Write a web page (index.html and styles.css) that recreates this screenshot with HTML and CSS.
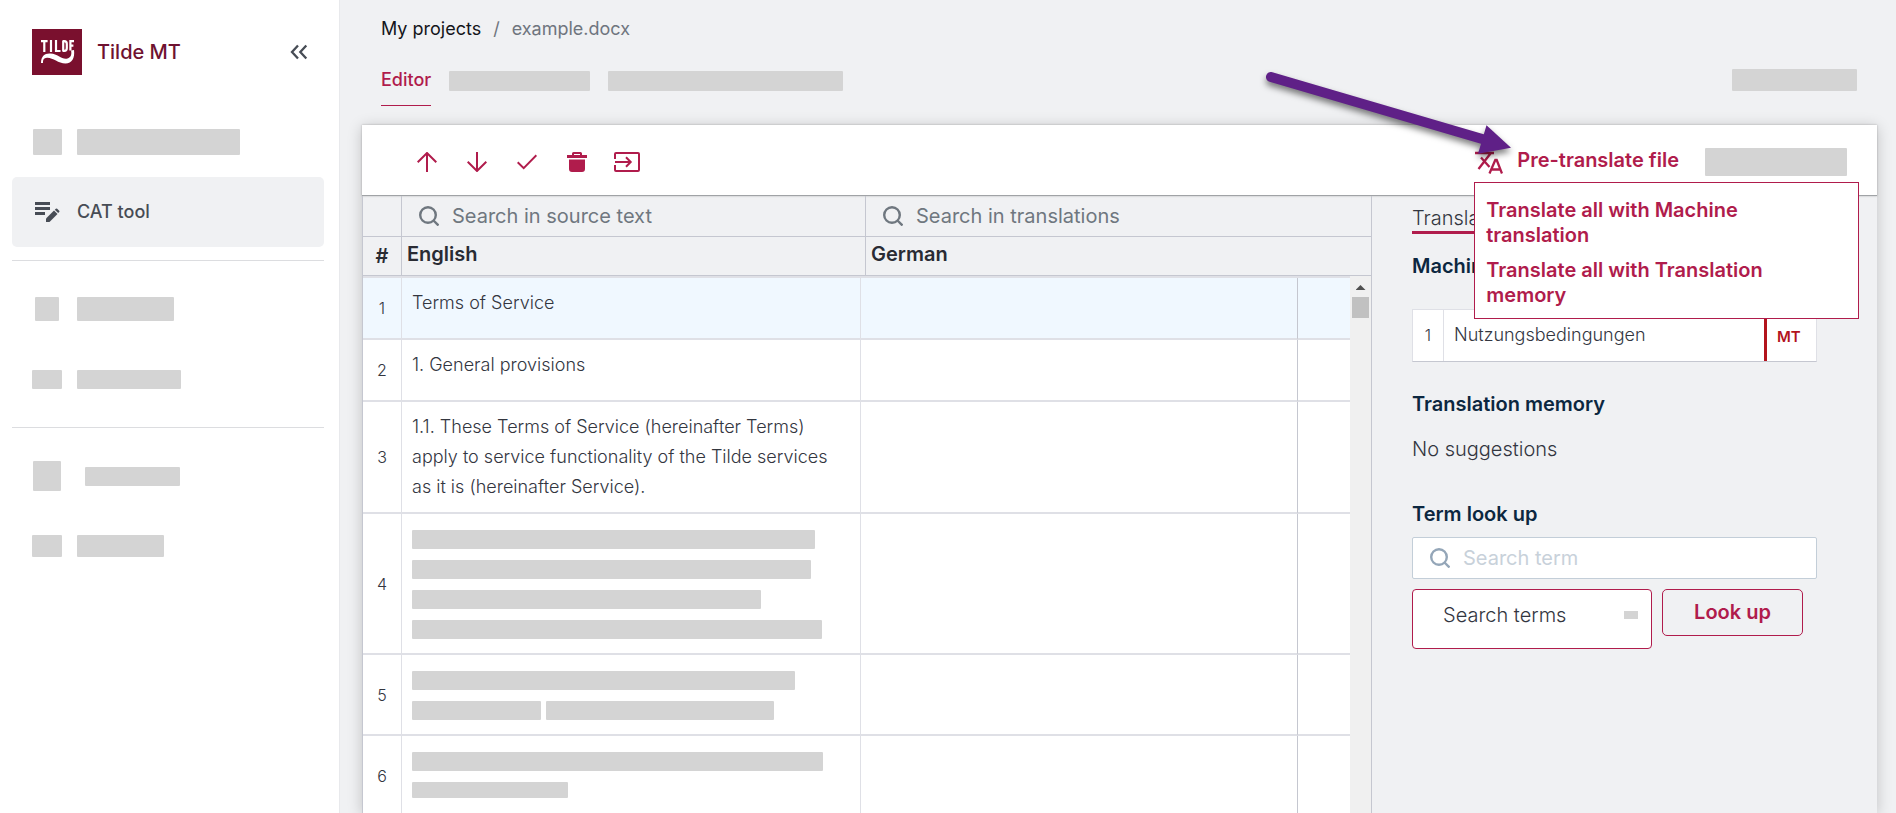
FILE: index.html
```html
<!DOCTYPE html>
<html lang="en">
<head>
<meta charset="utf-8">
<title>Tilde MT – CAT tool</title>
<link rel="stylesheet" href="styles.css">
</head>
<body>
<div class="app">
  <aside class="sidebar">
    <header class="brand">
      <svg class="brand-logo" viewBox="0 0 50 46" aria-hidden="true">
        <rect width="50" height="46" fill="#7a102e"/>
        <g fill="none" stroke="#fff" stroke-width="2.2">
          <path d="M9 12.2h6.600M12.300 12v11M19 11v12M24 11v11h4.500M31.200 12v9.900M30.500 12.100h1.800q2.500 0 2.500 2.600v4.600q0 2.600-2.500 2.600h-1.800M42 12.100h-3.600v9.500M38.400 16.600h3"/>
        </g>
        <path d="M9 34C9 27 13 24 18.500 24.500C26 25 30 31 35.500 29.500C39 28.500 40 25 39 21.500L42 21C43 29 40 34.500 33.500 34.500C26 34.500 21 28.500 15 28.800C11.500 29 11 31 11 34Z" fill="#fff"/>
      </svg>
      <span class="brand-name">Tilde MT</span>
      <button class="icon-button collapse" aria-label="Collapse menu">
        <svg width="18" height="16" viewBox="0 0 18 16"><path d="M8 1.500 2 8l6 6.500M16.300 1.500l-6 6.500 6 6.500" fill="none" stroke="#474c55" stroke-width="2.300"/></svg>
      </button>
    </header>
    <nav class="menu">
      <div class="menu-item"><span class="menu-icon"><span class="skeleton" style="width:29px;height:26px"></span></span><span class="skeleton" style="width:163px;height:26px"></span></div>
      <a class="menu-item active" href="#cat">
        <span class="menu-icon">
          <svg width="26" height="22" viewBox="0 0 26 22"><g fill="#474c55"><path d="M1 1h15v3H1zM1 6h15v3H1zM1 11h10v3H1z"/><path d="M12 17.500 20 9.500l3.500 3.500-8 8H12z"/><path d="m20.800 8.700 1-1q.7-.6 1.400 0l2 2q.6.7 0 1.400l-1 1z"/></g></svg>
        </span>
        <span>CAT tool</span>
      </a>
      <hr class="menu-line">
      <div class="menu-item"><span class="menu-icon"><span class="skeleton" style="width:24px;height:24px"></span></span><span class="skeleton" style="width:97px;height:24px"></span></div>
      <div class="menu-item"><span class="menu-icon"><span class="skeleton" style="width:30px;height:19px"></span></span><span class="skeleton" style="width:104px;height:19px"></span></div>
      <hr class="menu-line">
      <div class="menu-item"><span class="menu-icon"><span class="skeleton" style="width:28px;height:30px"></span></span><span class="skeleton indented" style="width:95px;height:19px"></span></div>
      <div class="menu-item"><span class="menu-icon"><span class="skeleton" style="width:30px;height:22px"></span></span><span class="skeleton" style="width:87px;height:22px"></span></div>
    </nav>
  </aside>

  <main class="main">
    <nav class="breadcrumb" aria-label="Breadcrumb">
      <a href="#projects">My projects</a><span>/</span><span>example.docx</span>
    </nav>
    <div class="tabs">
      <a class="tab" href="#editor">Editor</a>
      <span class="skeleton" style="width:141px;height:20px"></span>
      <span class="skeleton" style="width:235px;height:20px"></span>
      <span class="skeleton push" style="width:125px;height:22px"></span>
    </div>

    <section class="panel">
      <div class="toolbar">
        <div class="tools">
          <button class="icon-button" aria-label="Previous segment"><svg width="20" height="20" viewBox="0 0 20 20"><path d="M10 20V1M.7 10.300 10 1l9.300 9.300"/></svg></button>
          <button class="icon-button" aria-label="Next segment"><svg width="20" height="20" viewBox="0 0 20 20"><path d="M10 0v19M.7 9.700 10 19l9.300-9.300"/></svg></button>
          <button class="icon-button" aria-label="Confirm segment"><svg width="20" height="20" viewBox="0 0 20 20"><path d="m.7 10.200 6 6L19.400 3.300"/></svg></button>
          <button class="icon-button" aria-label="Clear segment"><svg class="solid" width="20" height="20" viewBox="0 0 20 20"><path fill-rule="evenodd" d="M5 3V1.500Q5 0 6.500 0h7Q15 0 15 1.500V3h5v3H0V3zM7 3h6V2H7zM2 7.500h16V17q0 3-3 3H5q-3 0-3-3z"/></svg></button>
          <button class="icon-button" aria-label="Copy source"><svg width="26" height="20" viewBox="0 0 26 20"><path d="M1 7V2q0-1 1-1h22q1 0 1 1v16q0 1-1 1H2q-1 0-1-1v-5M1 10h15.500M12 5.300l4.700 4.700-4.700 4.700"/></svg></button>
        </div>
        <div class="pretranslate">
          <button class="pretranslate-button">
            <svg width="28" height="23" viewBox="0 0 28 23" aria-hidden="true"><path d="M0 2h19M3.500 18 15.500 2.500M6 6.500 14.500 16M14.500 22.500 20.300 9h1.400l5.300 13.500M16.500 18.500h9" fill="none" stroke="#b01c4c" stroke-width="2.300"/></svg>
            Pre-translate file
          </button>
          <div class="dropdown">
            <button class="dropdown-item">Translate all with Machine translation</button>
            <button class="dropdown-item">Translate all with Translation memory</button>
          </div>
        </div>
        <span class="skeleton" style="width:142px;height:28px"></span>
      </div>

      <div class="workspace">
        <div class="segments">
          <div class="segments-head">
            <div class="head-cell"></div>
            <label class="head-cell search">
              <svg width="20" height="20" viewBox="0 0 20 20"><circle cx="9" cy="9" r="7.800"/><path d="m14.500 14.500 5 5"/></svg>
              <input type="search" placeholder="Search in source text" aria-label="Search in source text">
            </label>
            <label class="head-cell search">
              <svg width="20" height="20" viewBox="0 0 20 20"><circle cx="9" cy="9" r="7.800"/><path d="m14.500 14.500 5 5"/></svg>
              <input type="search" placeholder="Search in translations" aria-label="Search in translations">
            </label>
            <div class="head-cell title number">#</div>
            <div class="head-cell title">English</div>
            <div class="head-cell title">German</div>
          </div>
          <div class="segments-body">
            <table class="grid">
              <colgroup><col class="col-number"><col class="col-source"><col class="col-target"><col class="col-state"></colgroup>
              <tbody>
                <tr class="current"><th scope="row">1</th><td>Terms of Service</td><td></td><td></td></tr>
                <tr><th scope="row">2</th><td>1. General provisions</td><td></td><td></td></tr>
                <tr><th scope="row">3</th><td>1.1. These Terms of Service (hereinafter Terms) apply to service functionality of the Tilde services as it is (hereinafter Service).</td><td></td><td></td></tr>
                <tr><th scope="row">4</th><td class="bars"><div class="bar-list">
                  <span class="skeleton" style="width:403px"></span>
                  <span class="skeleton" style="width:399px"></span>
                  <span class="skeleton" style="width:349px"></span>
                  <span class="skeleton" style="width:410px"></span></div></td><td></td><td></td></tr>
                <tr><th scope="row">5</th><td class="bars"><div class="bar-list">
                  <span class="skeleton" style="width:383px"></span>
                  <div class="bar-row"><span class="skeleton" style="width:129px"></span><span class="skeleton" style="width:228px"></span></div></div></td><td></td><td></td></tr>
                <tr><th scope="row">6</th><td class="bars"><div class="bar-list">
                  <span class="skeleton" style="width:411px"></span>
                  <span class="skeleton" style="width:156px;height:16px"></span></div></td><td></td><td></td></tr>
              </tbody>
            </table>
            <div class="scrollbar" aria-hidden="true"><span class="scroll-arrow"></span><span class="scroll-thumb"></span></div>
          </div>
        </div>

        <aside class="suggestions">
          <a class="side-tab" href="#suggestions">Translation</a>
          <h2>Machine translation</h2>
          <div class="match">
            <span class="match-number">1</span>
            <span class="match-text">Nutzungsbedingungen</span>
            <span class="match-kind">MT</span>
          </div>
          <h2 class="memory">Translation memory</h2>
          <p class="empty">No suggestions</p>
          <h2 class="lookup">Term look up</h2>
          <label class="term">
            <svg width="20" height="20" viewBox="0 0 20 20"><circle cx="9" cy="9" r="7.800"/><path d="m14.500 14.500 5 5"/></svg>
            <input type="search" placeholder="Search term" aria-label="Search term">
          </label>
          <div class="term-actions">
            <div class="select-box">
              <select aria-label="Look up mode"><option>Search terms</option></select>
              <span class="select-mark"></span>
            </div>
            <button class="lookup-button">Look up</button>
          </div>
        </aside>
      </div>
    </section>
  </main>

  <svg class="pointer" width="260" height="100" viewBox="0 0 260 100" aria-hidden="true">
    <path d="M11 17 224 79.500" stroke="#5f2087" stroke-width="10" stroke-linecap="round"/>
    <path d="M226.500 65.300 251 87.700 218 93.700Z" fill="#5f2087"/>
  </svg>
</div>
</body>
</html>
```

FILE: styles.css
```css
* { box-sizing: border-box; }

body {
  margin: 0;
  background: #f0f1f3;
  color: #33363f;
  font-family: Inter, "Liberation Sans", sans-serif;
  font-size: 18px;
  line-height: 24px;
}

a { color: inherit; text-decoration: none; }

button, input, select { font: inherit; color: inherit; }

button { border: 0; padding: 0; background: none; cursor: pointer; }

.app {
  position: relative;
  display: flex;
  height: 100vh;
  overflow: hidden;
}

.skeleton {
  display: block;
  flex: none;
  height: 19px;
  border-radius: 1px;
  background: #d4d4d4;
}

/* Sidebar */
.sidebar {
  flex: none;
  width: 340px;
  border-right: 1px solid #e8e9ec;
  background: #fff;
}

.brand {
  display: flex;
  align-items: center;
  height: 107px;
  padding: 0 31px 3px 32px;
}

.brand-logo { width: 50px; height: 46px; }

.brand-name {
  margin-left: 15px;
  color: #6f1230;
  font-size: 20px;
  font-weight: 500;
}

.collapse { margin-left: auto; }

.icon-button { display: flex; align-items: center; justify-content: center; }

.menu { padding: 0 15px 0 12px; }

.menu-item {
  display: flex;
  align-items: center;
  height: 70px;
  padding-left: 20px;
  border-radius: 5px;
  color: #474c55;
  font-weight: 500;
}

.active { background: #f0f1f3; }

.menu-icon {
  display: flex;
  justify-content: center;
  width: 30px;
  margin-right: 15px;
}

.indented { margin-left: 8px; }

.menu-line {
  height: 1px;
  margin: 13px 0;
  border: 0;
  background: #dcdde0;
}

/* Page header */
.main {
  display: flex;
  flex: 1;
  flex-direction: column;
  min-width: 0;
  padding: 17px 19px 0 22px;
}

.breadcrumb {
  display: flex;
  gap: 12px;
  padding-left: 19px;
  color: #6f757e;
}

.breadcrumb a { color: #14151a; }

.tabs {
  display: flex;
  align-items: flex-start;
  gap: 18px;
  margin-top: 27px;
  padding: 0 20px 0 19px;
}

.tabs .skeleton { margin-top: 3px; }

.tabs .push { margin-top: 1px; margin-left: auto; }

.tab {
  padding-bottom: 13px;
  border-bottom: 1px solid #b01c4c;
  color: #b01c4c;
  font-weight: 500;
}

/* Panel */
.panel {
  display: flex;
  flex: 1;
  flex-direction: column;
  min-height: 0;
  margin-top: 19px;
  box-shadow: 0 2px 14px rgba(0, 0, 0, .2);
}

.toolbar {
  display: flex;
  flex: none;
  align-items: center;
  height: 71px;
  padding: 0 30px 0 40px;
  border-bottom: 1px solid #a0a3a6;
  background: #fff;
  box-shadow: 0 0 2px rgba(0, 0, 0, .25);
}

.tools { display: flex; padding-top: 4px; }

.tools .icon-button { width: 50px; height: 40px; }

.tools svg { fill: none; stroke: #b01c4c; stroke-width: 2; }

.tools .solid { fill: #b01c4c; stroke: none; }

.toolbar > .skeleton { margin-top: 3px; }

.pretranslate {
  position: relative;
  margin-right: 26px;
  margin-left: auto;
  padding-top: 2px;
  color: #b01c4c;
  font-size: 20px;
  font-weight: 600;
}

.pretranslate-button {
  display: flex;
  align-items: flex-start;
  gap: 14px;
}

.pretranslate-button svg { margin-top: 3px; }

.dropdown {
  position: absolute;
  z-index: 2;
  top: 36px;
  left: -1px;
  display: grid;
  gap: 10px;
  width: 385px;
  padding: 15px 40px 10px 11px;
  border: 1px solid #b01c4c;
  background: #fff;
}

.dropdown-item { line-height: 25px; text-align: left; }

.workspace {
  display: grid;
  flex: 1;
  grid-template-columns: minmax(0, 2fr) minmax(0, 1fr);
  min-height: 0;
}

/* Segment list */
.segments {
  display: flex;
  flex-direction: column;
  min-height: 0;
  border-right: 1px solid #c5c7d0;
  border-left: 1px solid #c5c7d0;
}

.segments-head {
  display: grid;
  flex: none;
  grid-template: 41px 39px / 39px minmax(0, 464fr) minmax(0, 505fr);
}

.head-cell {
  border-right: 1px solid #c5c7d0;
  border-bottom: 1px solid #c5c7d0;
}

.head-cell:nth-child(3n) { border-right: 0; }

.search, .term { display: flex; align-items: center; gap: 13px; }

.search { padding-left: 17px; color: #6f777f; }

.search svg, .term svg { flex: none; fill: none; stroke: currentColor; stroke-width: 2.4; }

.search input, .term input {
  flex: 1;
  min-width: 0;
  padding: 0;
  border: 0;
  outline: 0;
  background: none;
  font-size: 20px;
}

input::placeholder { color: inherit; opacity: 1; }

.title {
  padding: 5px;
  color: #292b33;
  font-size: 20px;
  font-weight: 600;
}

.title.number { padding: 7px 0; text-align: center; }

.segments-body {
  display: flex;
  flex: 1;
  min-height: 0;
  overflow: hidden;
}

.grid {
  flex: 1;
  align-self: flex-start;
  min-width: 0;
  border-top: 2px solid #dfe0e6;
  border-spacing: 0;
  background: #fff;
  table-layout: fixed;
}

.col-number { width: 39px; }
.col-source { width: 46.5%; }
.col-state { width: 52px; }

.grid th, .grid td {
  border-bottom: 2px solid #dfe0e6;
}

.grid th {
  padding: 0;
  border-right: 1px solid #dfe0e6;
  font-size: 16px;
  font-weight: 300;
}

.grid td {
  height: 62px;
  padding: 10px;
  border-right: 1px solid #dfe0e6;
  font-weight: 300;
  line-height: 30px;
  vertical-align: top;
}

.grid td:nth-child(2) { padding-right: 24px; }

.grid td:nth-child(3) { border-right-color: #c5c7d0; }

.grid td:last-child { border-right: 0; }

.grid .bars { height: 81px; padding: 16px 10px 14px; }

.bar-list { display: grid; gap: 11px; }

.bar-row { display: flex; gap: 5px; }

.current { background: #f0f8ff; }

.scrollbar {
  flex: none;
  width: 21px;
  padding: 9px 2px;
  background: #f0f0f0;
}

.scroll-arrow {
  display: block;
  width: 10px;
  height: 5px;
  margin: 0 auto 7px;
  background: #505050;
  clip-path: polygon(50% 0, 100% 100%, 0 100%);
}

.scroll-thumb { display: block; height: 21px; background: #c1c1c1; }

/* Suggestions */
.suggestions {
  padding: 10px 60px 0 40px;
  font-size: 20px;
  font-weight: 300;
}

.side-tab {
  display: inline-block;
  padding-bottom: 1px;
  border-bottom: 3px solid #b01c4c;
}

h2 {
  margin: 20px 0 0;
  color: #0c2740;
  font-size: 20px;
  font-weight: 600;
}

.match {
  display: flex;
  height: 53px;
  margin-top: 31px;
  border: 1px solid #dfe0e6;
  border-bottom-color: #c5c7d0;
  background: #fff;
  font-size: 18px;
}

.match span { padding-top: 13px; }

.match-number {
  width: 31px;
  border-right: 1px solid #dfe0e6;
  font-size: 16px;
  text-align: center;
}

.match-text { flex: 1; padding-left: 10px; }

.match .match-kind {
  width: 52px;
  padding: 15px 0 0 10px;
  border-left: 3px solid #b3141d;
  color: #b3141d;
  font-size: 15px;
  font-weight: 600;
}

.memory { margin-top: 30px; }

.empty { margin: 21px 0 0; }

.lookup { margin-top: 41px; }

.term {
  height: 42px;
  margin-top: 11px;
  padding: 0 17px;
  border: 1px solid #c3ced8;
  border-radius: 2px;
  background: #fff;
  color: #94a6b8;
}

.term input { color: #c8d1da; font-weight: 400; }

.term-actions { display: flex; align-items: flex-start; gap: 10px; margin-top: 10px; }

.select-box { position: relative; width: 240px; }

.select-box select {
  display: block;
  width: 100%;
  height: 60px;
  padding: 0 30px 8px;
  border: 1px solid #b01c4c;
  border-radius: 4px;
  background: #fff;
  appearance: none;
}

.select-mark {
  position: absolute;
  top: 22px;
  right: 14px;
  width: 14px;
  height: 8px;
  background: #d4d4d4;
}

.lookup-button {
  width: 141px;
  height: 47px;
  padding-bottom: 1px;
  border: 1px solid #b01c4c;
  border-radius: 5px;
  color: #b01c4c;
  font-weight: 600;
}

/* Callout arrow over the page */
.pointer {
  position: absolute;
  z-index: 3;
  top: 60px;
  right: 376px;
  overflow: visible;
  filter: drop-shadow(0 4px 3px rgba(0, 0, 0, .5));
  pointer-events: none;
}
```
